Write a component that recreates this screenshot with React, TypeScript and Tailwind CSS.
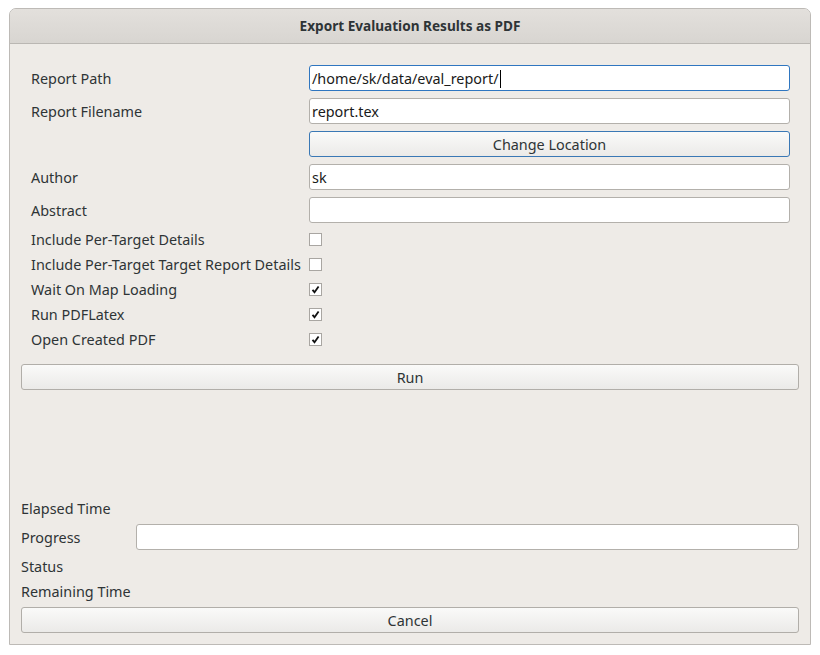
const FONT = "font-['Noto_Sans',sans-serif]";

const FIELDS = [
  { label: "Report Path", value: "/home/sk/data/eval_report/", focused: true },
  { label: "Report Filename", value: "report.tex" },
];

const CHECKS = [
  { label: "Include Per-Target Details", checked: false },
  { label: "Include Per-Target Target Report Details", checked: false },
  { label: "Wait On Map Loading", checked: true },
  { label: "Run PDFLatex", checked: true },
  { label: "Open Created PDF", checked: true },
];

function TextField({ value, focused }: { value: string; focused?: boolean }) {
  return (
    <div
      className={`flex h-[26px] items-center rounded-[3px] border bg-white px-[2px] pt-[2px] text-[14.4px] text-[#1a1a1a] ${
        focused ? "border-[#2f76c0]" : "border-[#b3b0ab]"
      }`}
    >
      <span>{value}</span>
      {focused ? <span className="ml-[1px] h-[18px] w-px bg-black" /> : null}
    </div>
  );
}

function Button({ children, accent }: { children: React.ReactNode; accent?: boolean }) {
  return (
    <div
      className={`flex h-[26px] items-center justify-center rounded-[3px] border bg-gradient-to-b from-[#fafaf9] to-[#ebeae8] pt-[2px] text-[14.4px] text-[#2e3436] ${
        accent ? "border-[#3a78b5] from-[#f3f4f4] to-[#e4e6e7]" : "border-[#b1aea9]"
      }`}
    >
      {children}
    </div>
  );
}

function CheckBox({ checked }: { checked: boolean }) {
  return (
    <div className="flex h-[13px] w-[13px] items-center justify-center border border-[#a9a6a2] bg-white">
      {checked ? (
        <svg width="9" height="9" viewBox="0 0 9 9">
          <path d="M1.5 4.8 L3.5 7.2 L7.6 1.4" fill="none" stroke="#111" strokeWidth="1.8" />
        </svg>
      ) : null}
    </div>
  );
}

export default function App() {
  return (
    <div className={`h-[655px] w-[820px] bg-white px-[9px] pt-[8px] ${FONT}`}>
      <div className="flex h-[637px] flex-col rounded-t-[7px] border border-[#bdbab6] bg-[#eeebe7]">
        <div className="flex h-[35px] shrink-0 items-center justify-center rounded-t-[6px] border-b border-[#bab7b3] bg-gradient-to-b from-[#e3e0dc] to-[#d8d5d1] text-[13.6px] font-bold text-[#2e3436]">
          Export Evaluation Results as PDF
        </div>

        <div className="flex flex-1 flex-col px-[11px] pb-[11px]">
          <div className="grid grid-cols-[278px_1fr] gap-y-[7px] pl-[10px] pr-[9px] pt-[21px] text-[14.4px] text-[#2e3436]">
            {FIELDS.map((f) => (
              <div key={f.label} className="contents">
                <div className="flex h-[26px] items-center pt-[2px]">{f.label}</div>
                <TextField value={f.value} focused={f.focused} />
              </div>
            ))}
            <div />
            <Button accent>Change Location</Button>
            <div className="flex h-[26px] items-center pt-[2px]">Author</div>
            <TextField value="sk" />
            <div className="flex h-[26px] items-center pt-[2px]">Abstract</div>
            <TextField value="" />
            {CHECKS.map((c) => (
              <div key={c.label} className="contents">
                <div className="flex h-[18px] items-center whitespace-nowrap pt-[2px]">{c.label}</div>
                <div className="flex h-[18px] items-center">
                  <CheckBox checked={c.checked} />
                </div>
              </div>
            ))}
          </div>

          <div className="mt-[16px]">
            <Button>Run</Button>
          </div>

          <div className="flex-1" />

          <div className="grid grid-cols-[115px_1fr] gap-y-[7px] text-[14.4px] text-[#2e3436]">
            <div className="col-span-2 flex h-[18px] items-center pt-[2px]">Elapsed Time</div>
            <div className="flex h-[26px] items-center pt-[2px]">Progress</div>
            <div className="h-[26px] rounded-[3px] border border-[#b3b0ab] bg-white" />
            <div className="col-span-2 flex h-[18px] items-center pt-[2px]">Status</div>
            <div className="col-span-2 flex h-[18px] items-center pt-[2px]">Remaining Time</div>
            <div className="col-span-2">
              <Button>Cancel</Button>
            </div>
          </div>
        </div>
      </div>
    </div>
  );
}
